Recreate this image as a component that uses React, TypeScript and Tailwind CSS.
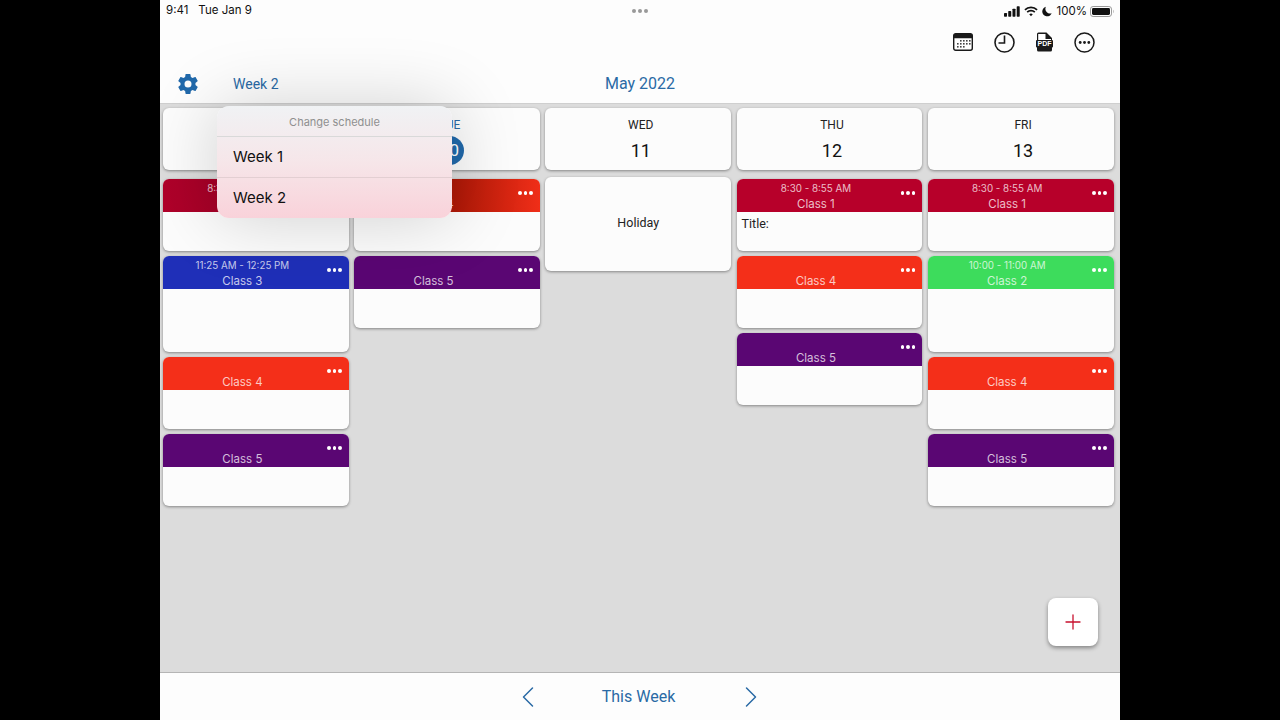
import React from "react";
import { ChevronLeft, ChevronRight, Plus } from "lucide-react";

type Item = {
  name: string;
  color: string;
  time?: string;
  tall?: boolean;
  title?: string;
};

const c1 = "bg-[#b7002a]";
const c2 = "bg-[#3ddc5c]";
const c3 = "bg-[#1f2fb8]";
const c4 = "bg-[#f42f19]";
const c5 = "bg-[#5a0673]";

const monday: Item[] = [
  { name: "Class 1", color: "bg-gradient-to-r from-[#b0002a] to-[#8c001f]", time: "8:30 - 8:55 AM" },
  { name: "Class 3", color: c3, time: "11:25 AM - 12:25 PM", tall: true },
  { name: "Class 4", color: c4 },
  { name: "Class 5", color: c5 },
];
const tuesday: Item[] = [
  // darkened next to the popover
  { name: "Class 4", color: "bg-gradient-to-r from-[#a81606] from-[50%] to-[#f02e18]" },
  { name: "Class 5", color: c5 },
];
const thursday: Item[] = [
  { name: "Class 1", color: c1, time: "8:30 - 8:55 AM", title: "Title:" },
  { name: "Class 4", color: c4 },
  { name: "Class 5", color: c5 },
];
const friday: Item[] = [
  { name: "Class 1", color: c1, time: "8:30 - 8:55 AM" },
  { name: "Class 2", color: c2, time: "10:00 - 11:00 AM", tall: true },
  { name: "Class 4", color: c4 },
  { name: "Class 5", color: c5 },
];

const DayCard = ({ day, date, today }: { day: string; date: string; today?: boolean }) => (
  <div className="h-[62px] rounded-md bg-[#fcfcfc] shadow-[0_1px_3px_rgba(0,0,0,0.4)] flex flex-col items-center pt-[10px] pl-[5px]">
    <div className={`text-[12px] leading-[14px] ${today ? "text-[#2a6aa5]" : "text-[#222]"}`}>{day}</div>
    {today ? (
      <div className="mt-[4px] w-[29px] h-[29px] rounded-full bg-[#2169ab] text-white text-[17px] leading-[29px] text-center">
        {date}
      </div>
    ) : (
      <div className="mt-[8px] text-[18px] leading-[22px] text-[#111]">{date}</div>
    )}
  </div>
);

const ClassCard = ({ item }: { item: Item }) => (
  <div
    className={`${item.tall ? "h-[96px]" : "h-[72px]"} rounded-md bg-[#fcfcfc] shadow-[0_1px_3px_rgba(0,0,0,0.4)] overflow-hidden`}
  >
    <div className={`relative h-[33px] ${item.color} text-white/75 flex flex-col items-center pr-[27px] font-['Inter',sans-serif]`}>
      <div className="h-[18px] pt-[3px] text-[9.800px] leading-[14px] whitespace-nowrap">{item.time}</div>
      <div className="text-[11.500px] leading-[14px]">{item.name}</div>
      <div className="absolute right-[7px] top-[12px] flex gap-[2px]">
        <span className="w-[3.500px] h-[3.500px] rounded-full bg-white" />
        <span className="w-[3.500px] h-[3.500px] rounded-full bg-white" />
        <span className="w-[3.500px] h-[3.500px] rounded-full bg-white" />
      </div>
    </div>
    {item.title && <div className="px-[5px] pt-[5px] text-[12.500px] leading-[14px] text-[#222]">{item.title}</div>}
  </div>
);

const Column = ({ items }: { items: Item[] }) => (
  <div className="flex flex-col gap-[5px] pt-[9px]">
    {items.map((item, i) => (
      <ClassCard key={i} item={item} />
    ))}
  </div>
);

const StatusIcons = () => (
  <div className="flex-1 flex items-center justify-end text-[#111] font-['Inter',sans-serif] text-[11.500px]">
    <svg width="16" height="11" viewBox="0 0 17 11" fill="#111">
      <rect x="0" y="7" width="3.200" height="4" rx="0.7" />
      <rect x="4.500" y="5" width="3.200" height="6" rx="0.7" />
      <rect x="9" y="2.500" width="3.200" height="8.500" rx="0.7" />
      <rect x="13.500" y="0" width="3.200" height="11" rx="0.7" />
    </svg>
    <svg className="ml-[4px]" width="14" height="11" viewBox="0 0 15 11" fill="none" stroke="#111" strokeWidth="1.800">
      <path d="M1 3.800a9.200 9.200 0 0 1 13 0" />
      <path d="M3.400 6.200a5.800 5.800 0 0 1 8.200 0" />
      <path d="M7.500 10.600 5.600 8.500a2.700 2.700 0 0 1 3.800 0z" fill="#111" stroke="none" />
    </svg>
    <svg className="ml-[4px]" width="10" height="11" viewBox="0 0 11 11" fill="#111">
      <path d="M4.300.4a5.300 5.300 0 1 0 6.300 6.900A5 5 0 0 1 4.300.4z" />
    </svg>
    <span className="ml-[5px] leading-[14px]">100%</span>
    <svg className="ml-[3px]" width="24" height="11" viewBox="0 0 24 11">
      <rect x="0.500" y="0.500" width="21" height="10" rx="2.600" fill="none" stroke="#999" />
      <rect x="2" y="2" width="18" height="7" rx="1.400" fill="#111" />
      <path d="M23 3.800c.7.300.7 3.100 0 3.400z" fill="#888" />
    </svg>
  </div>
);

const CalendarIcon = () => (
  <svg width="20" height="18" viewBox="0 0 20 18">
    <rect x="0.700" y="0.700" width="18.600" height="16.600" rx="2" fill="#fff" stroke="#1a1a1a" strokeWidth="1.400" />
    <path d="M0.700 2.700a2 2 0 0 1 2-2h14.600a2 2 0 0 1 2 2v2.500H0.700z" fill="#1a1a1a" />
    <g fill="#444">
      <rect x="7" y="7" width="1.600" height="1.600" />
      <rect x="10" y="7" width="1.600" height="1.600" />
      <rect x="13" y="7" width="1.600" height="1.600" />
      <rect x="16" y="7" width="1.600" height="1.600" />
      <rect x="4" y="10" width="1.600" height="1.600" />
      <rect x="7" y="10" width="1.600" height="1.600" />
      <rect x="10" y="10" width="1.600" height="1.600" />
      <rect x="13" y="10" width="1.600" height="1.600" />
      <rect x="16" y="10" width="1.600" height="1.600" />
      <rect x="4" y="13" width="1.600" height="1.600" />
      <rect x="7" y="13" width="1.600" height="1.600" />
      <rect x="10" y="13" width="1.600" height="1.600" />
    </g>
  </svg>
);

const ClockIcon = () => (
  <svg width="21" height="21" viewBox="0 0 21 21" fill="none" stroke="#1a1a1a" strokeWidth="1.600">
    <circle cx="10.500" cy="10.500" r="9.500" />
    <path d="M10.500 3.500v7.500H4.500" />
  </svg>
);

const PdfIcon = () => (
  <svg width="17" height="20" viewBox="0 0 17 20">
    <path d="M2.500 0.500h8l5.500 5.500v12a1.500 1.500 0 0 1-1.500 1.500h-12a1.500 1.500 0 0 1-1.500-1.500v-16a1.500 1.500 0 0 1 1.500-1.500z" fill="#1a1a1a" />
    <path d="M2.200 2h7.300v5h5.500v1H2.200z" fill="#fff" />
    <rect x="0" y="8" width="17" height="7.500" rx="1" fill="#1a1a1a" />
    <text x="8.500" y="14.200" textAnchor="middle" fontSize="7" fontWeight="700" fill="#fff" fontFamily="Liberation Sans, sans-serif">
      PDF
    </text>
  </svg>
);

const MoreIcon = () => (
  <svg width="21" height="21" viewBox="0 0 21 21" fill="none">
    <circle cx="10.500" cy="10.500" r="9.500" stroke="#1a1a1a" strokeWidth="1.500" />
    <circle cx="6.200" cy="10.500" r="1.400" fill="#1a1a1a" />
    <circle cx="10.500" cy="10.500" r="1.400" fill="#1a1a1a" />
    <circle cx="14.800" cy="10.500" r="1.400" fill="#1a1a1a" />
  </svg>
);

const Gear = () => (
  <svg className="ml-[16px]" width="24" height="24" viewBox="0 0 24 24" fill="#2169ab">
    <path d="M19.430 12.980c.04-.32.070-.64.070-.98s-.03-.66-.07-.98l2.110-1.650c.19-.15.240-.42.120-.64l-2-3.460c-.12-.22-.39-.3-.61-.22l-2.490 1c-.52-.4-1.080-.73-1.690-.98l-.38-2.650A.49.49 0 0 0 14 2h-4c-.25 0-.46.18-.49.42l-.38 2.650c-.61.25-1.170.59-1.690.98l-2.490-1c-.23-.09-.49 0-.61.22l-2 3.460c-.13.220-.07.490.12.640l2.110 1.650c-.04.320-.07.650-.07.980s.03.660.07.980l-2.110 1.650c-.19.150-.24.420-.12.640l2 3.460c.12.220.39.300.61.220l2.490-1c.52.400 1.080.730 1.690.980l.38 2.650c.03.240.24.420.49.420h4c.25 0 .46-.18.49-.42l.38-2.650c.61-.25 1.170-.59 1.690-.98l2.490 1c.23.090.49 0 .61-.22l2-3.460c.12-.22.070-.49-.12-.64zM12 15.500a3.500 3.500 0 1 1 0-7 3.500 3.500 0 0 1 0 7z" />
  </svg>
);

export default function App() {
  return (
    <div className="w-[1280px] h-[720px] bg-black flex justify-center font-['Roboto',sans-serif] overflow-hidden">
      <div className="relative w-[960px] h-[720px] bg-[#dcdcdc] flex flex-col">
        <header className="h-[104px] shrink-0 bg-[#fdfdfd] border-b border-[#cfcfcf] flex flex-col">
          <div className="h-[20px] pt-[2px] flex items-center px-[6px] text-[#111]">
            <div className="flex-1 flex gap-[10px] font-['Inter',sans-serif] text-[11.500px]">
              <span>9:41</span>
              <span>Tue Jan 9</span>
            </div>
            <div className="flex gap-[2px]">
              <span className="w-[4px] h-[4px] rounded-full bg-[#999]" />
              <span className="w-[4px] h-[4px] rounded-full bg-[#999]" />
              <span className="w-[4px] h-[4px] rounded-full bg-[#999]" />
            </div>
            <StatusIcons />
          </div>
          <div className="h-[44px] flex items-center justify-end gap-[21px] pr-[25px]">
            <CalendarIcon />
            <ClockIcon />
            <PdfIcon />
            <MoreIcon />
          </div>
          <div className="flex-1 flex items-center pt-[1px] text-[#2a6aa5]">
            <div className="flex-1 flex items-center">
              <Gear />
              <span className="ml-[33px] text-[14px]">Week 2</span>
            </div>
            <span className="text-[16px] leading-[22px]">May 2022</span>
            <div className="flex-1" />
          </div>
        </header>

        <main className="flex-1 min-h-0 pl-[3px] pt-[4px]">
          <div className="grid grid-cols-[repeat(5,185.750px)] gap-x-[5.450px]">
            <DayCard day="MON" date="9" />
            <DayCard day="TUE" date="10" today />
            <DayCard day="WED" date="11" />
            <DayCard day="THU" date="12" />
            <DayCard day="FRI" date="13" />
            <Column items={monday} />
            <Column items={tuesday} />
            <div className="pt-[7px]">
              <div className="h-[94px] pb-[2px] rounded-md bg-[#fcfcfc] shadow-[0_1px_3px_rgba(0,0,0,0.4)] flex items-center justify-center text-[12.500px] text-[#222]">
                Holiday
              </div>
            </div>
            <Column items={thursday} />
            <Column items={friday} />
          </div>
        </main>

        <footer className="h-[48px] shrink-0 bg-[#fdfdfd] border-t border-[#b5b5b5] flex items-center justify-center text-[#2a6aa5] pr-[1px]">
          <ChevronLeft size={36} strokeWidth={1} />
          <span className="mx-[56px] text-[16px]">This Week</span>
          <ChevronRight className="ml-[2px]" size={36} strokeWidth={1} />
        </footer>

        <button className="absolute left-[888px] top-[598px] w-[50px] h-[48px] rounded-lg bg-white shadow-[0_2px_4px_rgba(0,0,0,0.4)] flex items-center justify-center">
          <Plus size={24} strokeWidth={1.300} color="#c8102e" />
        </button>

        <div className="absolute left-[57px] top-[106px] w-[235px] h-[112px] rounded-xl bg-gradient-to-b from-[#f0f2f4] via-[#f6e6e9] to-[#f9d2da] shadow-[0_0_70px_rgba(0,0,0,0.18)] font-['Inter',sans-serif]">
          <div className="h-[31px] text-center text-[11px] leading-[32px] text-[#8f8f8f] border-b border-[#d9d9d9]">
            Change schedule
          </div>
          <div className="h-[41px] pl-[16px] text-[15px] leading-[40px] text-[#111] border-b border-[#e3cfd2]">
            Week 1
          </div>
          <div className="h-[40px] pl-[16px] text-[15px] leading-[40px] text-[#111]">Week 2</div>
        </div>
      </div>
    </div>
  );
}
